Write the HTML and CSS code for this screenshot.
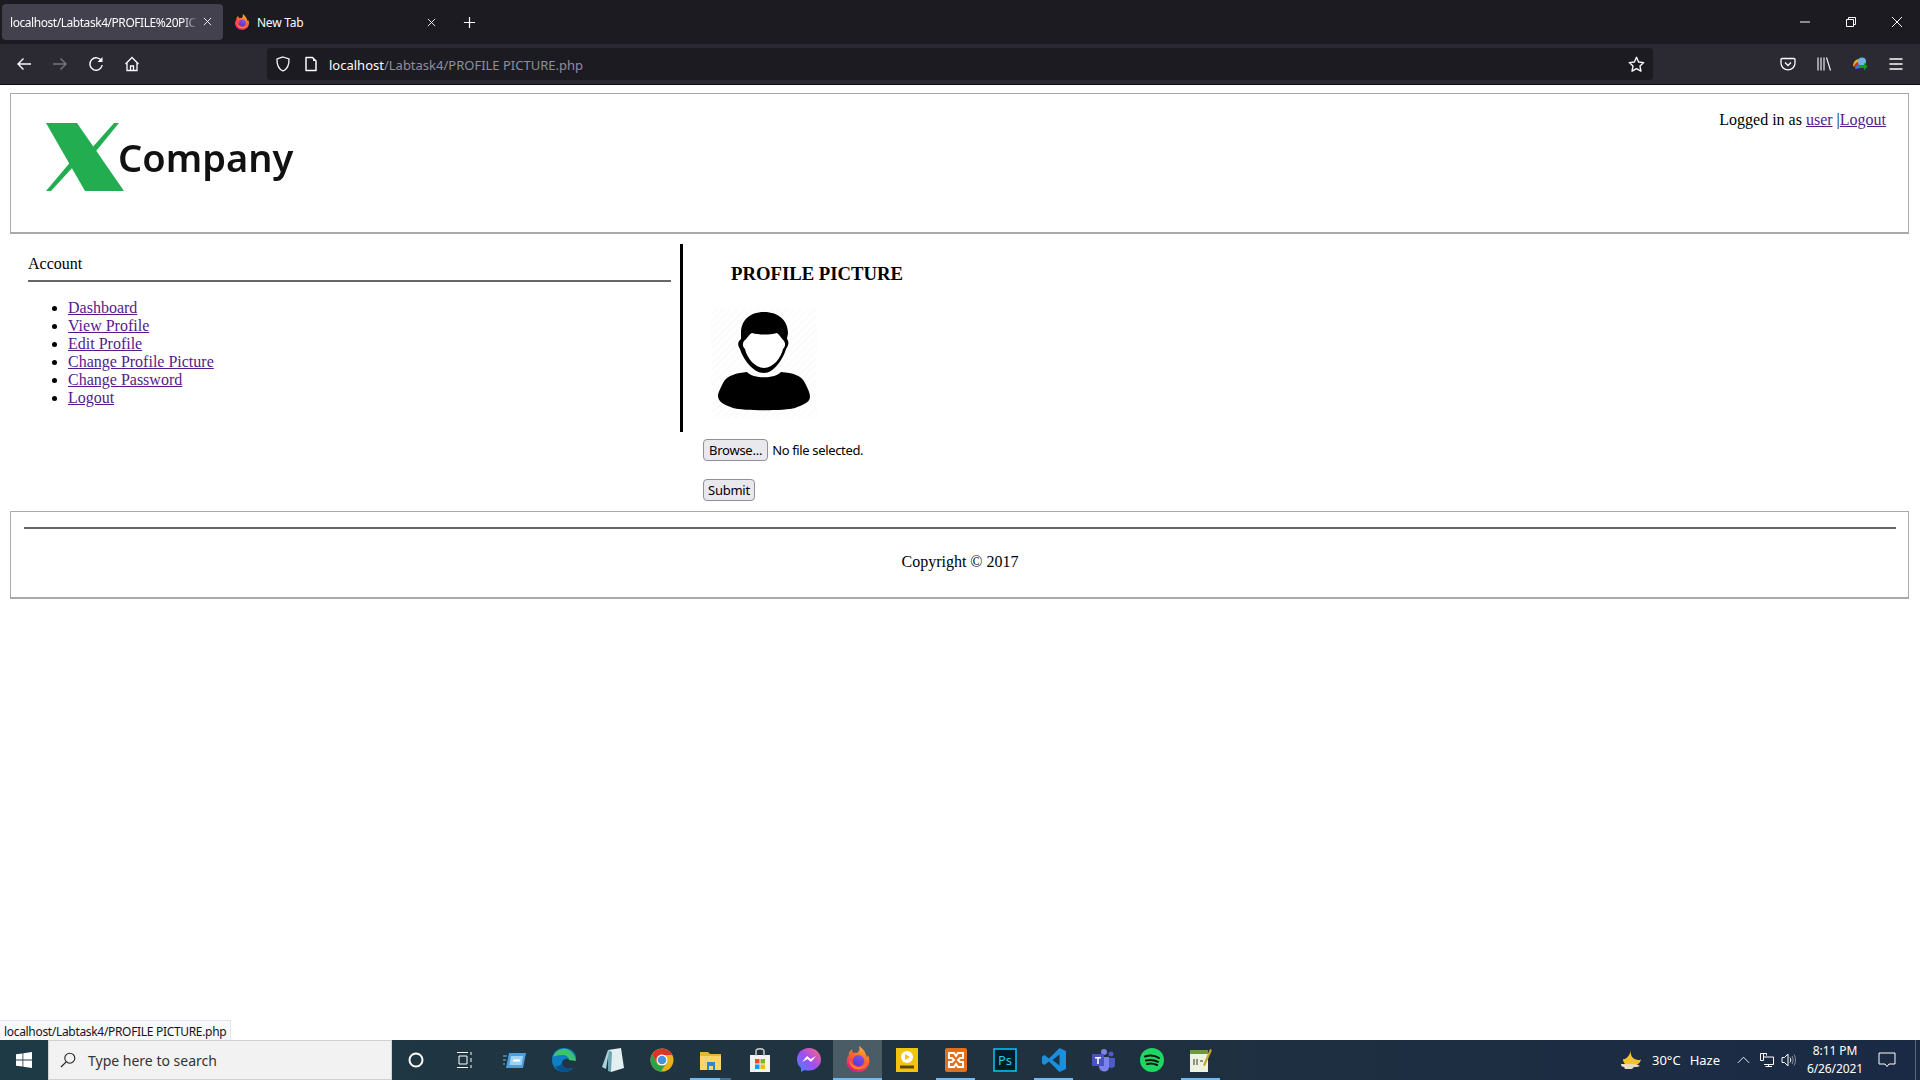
FILE: index.html
```html
<!DOCTYPE html>
<html lang="en">
<head>
    <meta charset="UTF-8">
    <title>localhost/Labtask4/PROFILE PICTURE.php</title>
    <link rel="stylesheet" href="styles.css">
</head>
<body>
    <!-- shared firefox logo, used in the tab and the taskbar -->
    <svg class="defs" width="0" height="0">
        <defs>
            <linearGradient id="fxBody" x1="0.8" y1="0" x2="0.3" y2="1">
                <stop offset="0" stop-color="#ffc02e"/>
                <stop offset="0.45" stop-color="#ff6a2b"/>
                <stop offset="1" stop-color="#e31587"/>
            </linearGradient>
            <linearGradient id="fxCore" x1="0.7" y1="0" x2="0.3" y2="1">
                <stop offset="0" stop-color="#8e4fe8"/>
                <stop offset="1" stop-color="#4b3ad6"/>
            </linearGradient>
            <linearGradient id="msgr" x1="0" y1="1" x2="1" y2="0">
                <stop offset="0" stop-color="#3a8bff"/>
                <stop offset=".5" stop-color="#a24cf2"/>
                <stop offset="1" stop-color="#ff6b7a"/>
            </linearGradient>
            <symbol id="firefox" viewBox="0 0 24 24">
                <path d="M13 0c1 3 0 5-2 6.500-1-.5-2.500-.5-3.500 0C7 5.500 6.500 4.500 6.500 3 4 4.500 3 7 3.500 9 2 10.500 1.500 12 1.500 14c0 5.800 4.700 10 10.500 10s10.500-4.700 10.500-10.500c0-2-.5-3.500-1.500-5-.2 1-.5 1.500-1 2C19.500 6 16.500 2.500 13 0z" fill="url(#fxBody)"/>
                <circle cx="12.500" cy="13.500" r="5.200" fill="url(#fxCore)"/>
                <path d="M4 13c0 6 5 9 9 8.500 4-.5 6.500-3 7.500-6-2 3-5 4.500-8.500 4-4-.5-6.500-3-8-6.500z" fill="#ff8a1f"/>
            </symbol>
        </defs>
    </svg>

    <!-- browser chrome -->
    <div class="titlebar">
        <div class="tab tab-active">
            <span class="tab-label">localhost/Labtask4/PROFILE%20PIC</span>
            <svg class="tab-close" viewBox="0 0 10 10"><path d="M1 1l8 8M9 1l-8 8" stroke="#fbfbfe" fill="none"/></svg>
        </div>
        <div class="tab">
            <svg class="tab-icon"><use href="#firefox"/></svg>
            <span class="tab-title">New Tab</span>
            <svg class="tab-close" viewBox="0 0 10 10"><path d="M1 1l8 8M9 1l-8 8" stroke="#fbfbfe" fill="none"/></svg>
        </div>
        <svg class="new-tab" viewBox="0 0 14 14"><path d="M7 1v12M1 7h12" stroke="#fbfbfe" stroke-width="1.300" fill="none"/></svg>
        <div class="window-controls">
            <svg viewBox="0 0 12 12"><path d="M1 6h10" stroke="#fbfbfe" fill="none"/></svg>
            <svg viewBox="0 0 12 12"><path d="M1.500 3.500h7v7h-7zM3.500 3.500v-2h7v7h-2" stroke="#fbfbfe" fill="none"/></svg>
            <svg viewBox="0 0 12 12"><path d="M1 1l10 10M11 1L1 11" stroke="#fbfbfe" fill="none"/></svg>
        </div>
    </div>

    <div class="toolbar">
        <div class="nav-buttons">
            <svg viewBox="0 0 16 16"><path d="M15 8H2M7.500 2.500L2 8l5.500 5.500" stroke="#fbfbfe" stroke-width="1.400" fill="none"/></svg>
            <svg viewBox="0 0 16 16"><path d="M1 8h13M8.500 2.500L14 8l-5.500 5.500" stroke="#77767e" stroke-width="1.400" fill="none"/></svg>
            <svg viewBox="0 0 16 16"><path d="M13.500 5A6.200 6.200 0 1 0 14.200 9" stroke="#fbfbfe" stroke-width="1.400" fill="none"/><path d="M14.500 1v5h-5" fill="#fbfbfe"/></svg>
            <svg viewBox="0 0 16 16"><path d="M1.500 8L8 1.500 14.500 8M3 7v7.500h10V7M6.500 14.500V10h3v4.500" stroke="#fbfbfe" stroke-width="1.300" fill="none"/></svg>
        </div>
        <div class="urlbar">
            <svg class="url-icon" viewBox="0 0 16 16"><path d="M8 1l6 2c.3 6-1.500 10-6 12C3.500 13 1.700 9 2 3z" stroke="#fbfbfe" stroke-width="1.300" fill="none"/></svg>
            <svg class="url-icon" viewBox="0 0 16 16"><path d="M3 1.500h6.500L13 5v9.500H3z" stroke="#fbfbfe" stroke-width="1.500" fill="none" stroke-linejoin="round"/><path d="M9 1.500h1V5h3" fill="#fbfbfe"/></svg>
            <span class="url-text"><span class="url-host">localhost</span>/Labtask4/PROFILE PICTURE.php</span>
            <svg class="url-star" viewBox="0 0 16 16"><path d="M8 1.200l2 4.400 4.800.6-3.500 3.300.9 4.800L8 11.900l-4.200 2.400.9-4.800L1.200 6.200 6 5.600z" stroke="#fbfbfe" stroke-width="1.300" fill="none" stroke-linejoin="round"/></svg>
        </div>
        <div class="tool-buttons">
            <svg viewBox="0 0 16 16"><path d="M2 2.500h12c.6 0 1 .4 1 1V7c0 4-3.300 6.800-7 6.800S1 11 1 7V3.500c0-.6.400-1 1-1z" stroke="#fbfbfe" stroke-width="1.300" fill="none"/><path d="M5 6.500l3 3 3-3" stroke="#fbfbfe" stroke-width="1.300" fill="none"/></svg>
            <svg viewBox="0 0 16 16"><path d="M2 1.500v13M5 1.500v13M8 1.500v13M10.500 1.500l4 13" stroke="#fbfbfe" stroke-width="1.100" fill="none"/></svg>
            <svg viewBox="0 0 16 16"><path d="M1 10c0-4 3-7 6-7l2 8z" fill="#e8b21c"/><path d="M1.500 11c1-3 3-5 5-5l1 6z" fill="#d8262c"/><path d="M3 13c0-3 2-4.500 4-4.500L9 12z" fill="#2f7fd0"/><circle cx="10" cy="5.500" r="4" fill="#6fb4e8"/><path d="M7 9h5V6.500l3.500 4-3.500 4V12H7z" fill="#119c1c"/></svg>
            <svg viewBox="0 0 16 16"><path d="M1.500 3h13M1.500 8h13M1.500 13h13" stroke="#fbfbfe" stroke-width="1.300" fill="none"/></svg>
        </div>
    </div>

    <!-- page content -->
    <div class="page">
        <div class="page-header">
            <div class="logo">
                <svg class="logo-x" viewBox="0 0 78 70" preserveAspectRatio="none">
                    <path d="M0 0h31l47 70H39z" fill="#22ad51"/>
                    <path d="M68 0h5L46 34l-3-5zM0 70h5l25-28-3-5z" fill="#22ad51"/>
                </svg>
                <span class="logo-text">Company</span>
            </div>
            <div class="login-info">Logged in as <a href="#">user</a> |<a href="#">Logout</a></div>
        </div>

        <div class="content">
            <div class="sidebar">
                <div class="sidebar-title">Account</div>
                <hr class="sidebar-rule">
                <ul class="sidebar-menu">
                    <li><a href="#">Dashboard</a></li>
                    <li><a href="#">View Profile</a></li>
                    <li><a href="#">Edit Profile</a></li>
                    <li><a href="#">Change Profile Picture</a></li>
                    <li><a href="#">Change Password</a></li>
                    <li><a href="#">Logout</a></li>
                </ul>
            </div>
            <div class="picture-panel">
                <h3 class="picture-title">PROFILE PICTURE</h3>
                <div class="avatar">
                    <svg viewBox="0 0 106 109">
                        <path d="M53 3C38 3 30 12 30 24c0 3 0 5 0 6-3 2-4 6-1 10 3 10 13 24 24 24 10 0 19-14 22-24 3-4 3-8 1-10 0-2 1-4 1-6C77 12 68 3 53 3z" fill="#000"/>
                        <path d="M33 32c3-2 5-7 8-8 7 2 17 2 25 0 3 2 4 5 7 8 2 3 1 6-1 8-2 9-10 19-19 19s-17-10-19-19c-2-2-3-5-1-8z" fill="#fff"/>
                        <path d="M36 63c6 7 28 7 34 0 12 1 20 3 24 11 3 6 5 10 5 14 0 5-7 8-15 11-10 3-52 3-62 0C14 96 7 93 7 87c0-3 2-7 5-13 4-8 14-10 24-11z" fill="#000"/>
                    </svg>
                </div>
                <form class="upload-form">
                    <div class="file-row">
                        <button type="button" class="form-button">Browse...</button>
                        <span class="file-name">No file selected.</span>
                    </div>
                    <button type="button" class="form-button submit-button">Submit</button>
                </form>
            </div>
        </div>

        <div class="page-footer">
            <hr class="footer-rule">
            <p class="copyright">Copyright © 2017</p>
        </div>

        <div class="status-tip">localhost/Labtask4/PROFILE PICTURE.php</div>
    </div>

    <!-- windows taskbar -->
    <div class="taskbar">
        <div class="start">
            <svg viewBox="0 0 16 16"><path d="M0 2.300L6.500 1.400V7.600H0zM7.300 1.300L16 0v7.600H7.300zM0 8.400h6.500v6.200L0 13.700zM7.300 8.400H16V16l-8.700-1.300z" fill="#fff"/></svg>
        </div>
        <div class="search">
            <svg viewBox="0 0 16 16"><circle cx="9.800" cy="6.200" r="5" stroke="#222" stroke-width="1.100" fill="none"/><path d="M6.200 9.800L1 15" stroke="#222" stroke-width="1.200"/></svg>
            <span>Type here to search</span>
        </div>
        <div class="task-icons">
            <div class="task-icon"><svg class="small" viewBox="0 0 16 16"><circle cx="8" cy="8" r="6.500" stroke="#fff" stroke-width="2" fill="none"/></svg></div>
            <div class="task-icon"><svg class="small" viewBox="0 0 16 16"><path d="M0 .5h11M0 15.500h11M2 4h8v8H2zM14 0v3M14 6v4M14 13v3" stroke="#fff" fill="none"/></svg></div>
            <div class="task-icon"><svg viewBox="0 0 24 24"><path d="M6 5h17l-3 15H3z" fill="#4a9fdc"/><path d="M8 8h12l-1.500 9H6.500z" fill="#9fd3f5"/><path d="M10 11.500h7v2h-7z" fill="#fff"/><path d="M0 8h4M0 12h3M0 16h2" stroke="#6bb7e8"/></svg></div>
            <div class="task-icon"><svg viewBox="0 0 24 24"><path d="M12 0C5 0 0 5 0 12c0 7 5 12 12 12 4 0 7-1.500 9-4-5 2-11 0-11-5 0-3 3-5 7-4l7 1c1-7-5-12-12-12z" fill="#0f7fc4"/><path d="M1 9C3 3 9 0 14 1c5 1 9 6 10 12l-7-1c0-3-3-5-6-5-4 0-9 1-10 2z" fill="#3bc46e"/><path d="M10 15c0 5 6 7 11 5-2 2.500-5 4-9 4-4 0-7-2-9-6 2 1 5 0 7-3z" fill="#0a4f8f"/></svg></div>
            <div class="task-icon"><svg class="shift" viewBox="0 0 24 24"><path d="M8 2l13-2 3 20-13 4z" fill="#e4eff2"/><path d="M8 2l4 2-1 20-3-1z" fill="#6fa5ae"/><path d="M2 19L8 2l1 1-3 18z" fill="#a5d3db"/></svg></div>
            <div class="task-icon"><svg viewBox="0 0 24 24"><circle cx="12" cy="12" r="11.500" fill="#e8b21c"/><path d="M12 .5A11.500 11.500 0 0 0 2 6.500L7 15l5-8h10.400A11.500 11.500 0 0 0 12 .5z" fill="#d8362c"/><path d="M2 6.500A11.500 11.500 0 0 0 11 23.500L15 17H8z" fill="#2aa24a"/><circle cx="12" cy="12" r="5.500" fill="#fff"/><circle cx="12" cy="12" r="4.300" fill="#4a8fe0"/></svg></div>
            <div class="task-icon running stacked">
                <svg viewBox="0 0 24 24"><path d="M1 4h8l2 2h11v16H1z" fill="#e8b534"/><path d="M1 8h21v14H1z" fill="#fbd56b"/><path d="M8 14h8v8h-2v-4h-4v4H8z" fill="#2a88cf"/></svg>
            </div>
            <div class="task-icon"><svg viewBox="0 0 24 24"><path d="M2 7h20v17H2z" fill="#f3f3f3"/><path d="M8 8V3c0-3 8-3 8 0v5" stroke="#ccc" stroke-width="1.500" fill="none"/><path d="M7 11h4.500v4.500H7z" fill="#e8501f"/><path d="M12.500 11H17v4.500h-4.500z" fill="#7cb928"/><path d="M7 16.500h4.500V21H7z" fill="#02a3ee"/><path d="M12.500 16.500H17V21h-4.500z" fill="#fbb70f"/></svg></div>
            <div class="task-icon"><svg viewBox="0 0 24 24"><path d="M12 0C5 0 0 5 0 11.500c0 3.500 1.500 6.500 4 8.500v4l3.500-2c1.500.5 3 .6 4.500.6 7 0 12-5 12-11S19 0 12 0z" fill="url(#msgr)"/><path d="M5 14l5-6 3.500 3L19 8l-5 6-3.500-3z" fill="#fff"/></svg></div>
            <div class="task-icon active"><svg class="large"><use href="#firefox"/></svg></div>
            <div class="task-icon"><svg viewBox="0 0 24 24"><path d="M1 0h22v24H1z" fill="#f3c40f"/><circle cx="12" cy="9" r="6" fill="#fff"/><path d="M10 6l5 3-5 3z" fill="#f3c40f"/><path d="M5 17.500h14v3H5z" fill="#5a4a00"/></svg></div>
            <div class="task-icon running"><svg viewBox="0 0 24 24"><rect x="1" width="22" height="24" rx="2" fill="#e0701e"/><path d="M5 5h5l2 3 2-3h5v5h-3l-2 2 2 2h3v5h-5l-2-3-2 3H5v-5h3l2-2-2-2H5z" fill="none" stroke="#fff" stroke-width="2"/></svg></div>
            <div class="task-icon"><svg viewBox="0 0 24 24"><path d="M1 1h22v22H1z" fill="#001d26" stroke="#00c8ff" stroke-width="1.500"/><text x="5" y="17" class="ps-label">Ps</text></svg></div>
            <div class="task-icon running"><svg viewBox="0 0 24 24"><path d="M17.500 0L24 3v18l-6.500 3L7 13.500 2.500 17 0 15.500V8.500L2.500 7 7 10.500zM17.500 6.500L10.500 12l7 5.500z" fill="#1a8fdd"/></svg></div>
            <div class="task-icon"><svg viewBox="0 0 24 24"><circle cx="13" cy="4" r="3" fill="#7b83eb"/><circle cx="20" cy="6" r="2.500" fill="#5059c9"/><path d="M8 9h10v10c0 6-9 6-10 0z" fill="#7b83eb"/><path d="M18 10h6v7c0 3-4 4-6 2z" fill="#5059c9"/><path d="M1 6h12v12H1z" fill="#4b53bc"/><path d="M4 9h6v1.500H7.800V16H6.200v-5.500H4z" fill="#fff"/></svg></div>
            <div class="task-icon"><svg viewBox="0 0 24 24"><circle cx="12" cy="12" r="12" fill="#1ed760"/><path d="M5 8.500c5-1.500 10-1 14 1.500M6 12.500c4-1 8-.7 12 1.300M7 16c3-.8 7-.5 10 1" stroke="#111" stroke-width="2" stroke-linecap="round" fill="none"/></svg></div>
            <div class="task-icon running"><svg class="shift" viewBox="0 0 24 24"><path d="M2 2h18v22H2z" fill="#eef3e0"/><path d="M2 2h18v4H2z" fill="#6f9a3a"/><path d="M6 11v6M9 11v6M12 13h3" stroke="#333" fill="none"/><path d="M15 17L22 1l2 1-7 16z" fill="#c9a227"/></svg></div>
        </div>
        <div class="tray">
            <svg class="tray-moon" viewBox="0 0 22 20"><path d="M11 0c-1 5 1 9 7 10 1 0 2 0 3-.5C20 14 16 16 11 16 6 16 3 13 3 9c3 1 7-4 8-9z" fill="#f6c42a"/><path d="M1 14h10c4 0 8 1 9 2-2 1-4 1-6 1l-2 2H5l-1-2c-2 0-3-1-3-3z" fill="#e9dcc0"/></svg>
            <span class="tray-weather">30°C</span>
            <span class="tray-weather">Haze</span>
            <svg class="tray-icon chevron" viewBox="0 0 14 14"><path d="M1 10l6-6 6 6" stroke="#fff" fill="none"/></svg>
            <svg class="tray-icon" viewBox="0 0 16 16"><path d="M1.500 1.500h6v2M4.500 1.500v7h-3v-7M5 5h9.500v7.500H5M9.500 12.500v2M6.500 14.500h6.500" stroke="#fff" fill="none"/></svg>
            <svg class="tray-icon" viewBox="0 0 16 16"><path d="M1 5.500h2.500L7 2v12l-3.500-3.500H1z" stroke="#fff" fill="none"/><path d="M9 5.500c1 1.500 1 3.500 0 5" stroke="#fff" fill="none"/><path d="M11 4c1.500 2.500 1.500 5.500 0 8M13 2.500c2 3.500 2 7.500 0 11" stroke="#8b93a3" fill="none"/></svg>
            <div class="clock"><div>8:11 PM</div><div>6/26/2021</div></div>
            <svg class="tray-icon notify" viewBox="0 0 18 16"><path d="M1 1h16v11h-6l-2 2.500L7 12H1z" stroke="#fff" fill="none"/></svg>
            <div class="show-desktop"></div>
        </div>
    </div>
</body>
</html>
```

FILE: styles.css
```css
html, body {
    height: 100%;
}

body {
    margin: 0;
    height: 1080px;
    overflow: hidden;
    display: flex;
    flex-direction: column;
    background: #fff;
    font-family: "Liberation Serif", serif;
    font-size: 16px;
    color: #000;
}

.defs {
    position: absolute;
}

/* browser chrome */
.titlebar {
    height: 44px;
    flex: none;
    display: flex;
    align-items: center;
    padding-left: 2px;
    background: #1c1b22;
    font-family: "Noto Sans", sans-serif;
    font-size: 12px;
    letter-spacing: -0.25px;
    color: #fbfbfe;
}

.tab {
    width: 221px;
    height: 36px;
    box-sizing: border-box;
    display: flex;
    align-items: center;
    padding: 0 8px;
    border-radius: 4px;
}

.tab-active {
    background: #42414d;
    position: relative;
}

.tab-active .tab-close {
    position: absolute;
    right: 11px;
    top: 13px;
}

.tab-label {
    width: 188px;
    overflow: hidden;
    white-space: nowrap;
    letter-spacing: -0.45px;
    -webkit-mask-image: linear-gradient(to right, #000 92%, transparent);
    mask-image: linear-gradient(to right, #000 92%, transparent);
}

.tab-icon {
    width: 16px;
    height: 16px;
    margin-left: 3px;
    margin-right: 7px;
}

.tab-title {
    flex: 1;
}

.tab-close {
    width: 9px;
    height: 9px;
    margin-right: 0;
}

.new-tab {
    width: 13px;
    height: 13px;
    margin-left: 19px;
}

.window-controls {
    margin-left: auto;
    display: flex;
    align-items: center;
    gap: 34px;
    padding-right: 17px;
}

.window-controls svg {
    width: 12px;
    height: 12px;
}

.toolbar {
    height: 40px;
    flex: none;
    box-sizing: border-box;
    display: flex;
    align-items: center;
    background: #2b2a33;
}

.nav-buttons, .tool-buttons {
    display: flex;
    align-items: center;
    gap: 20px;
}

.nav-buttons {
    padding-left: 16px;
    width: 251px;
}

.nav-buttons svg, .tool-buttons svg {
    width: 16px;
    height: 16px;
}

.urlbar {
    width: 1386px;
    height: 32px;
    display: flex;
    align-items: center;
    background: #1c1b22;
    border-radius: 4px;
    font-family: "Noto Sans", sans-serif;
    font-size: 13px;
    color: #8f8f9d;
}

.url-icon {
    width: 16px;
    height: 16px;
    margin-left: 8px;
    margin-right: -1px;
}

.url-icon:first-child {
    margin-left: 8px;
    margin-right: 4px;
}

.url-text {
    margin-left: 11px;
    padding-top: 2px;
    white-space: nowrap;
}

.url-host {
    color: #fbfbfe;
}

.url-star {
    width: 17px;
    height: 17px;
    margin-left: auto;
    margin-right: 8px;
}

.tool-buttons {
    margin-left: auto;
    padding-right: 16px;
}

/* page */
.page {
    flex: 1;
    position: relative;
    border-top: 1px solid #0c0c0d;
    padding: 8px 11px 0 10px;
}

.page-header {
    height: 141px;
    box-sizing: border-box;
    border: 2px solid #a9a9a9;
    border-width: 1px 1px 2px 1px;
    display: flex;
    justify-content: space-between;
    padding: 17px 22px 0 35px;
}

.logo {
    display: flex;
    align-items: flex-end;
    height: 80px;
    padding-top: 12px;
    box-sizing: border-box;
}

.logo-x {
    width: 78px;
    height: 68px;
}

.logo-text {
    margin-left: -6px;
    margin-bottom: 9px;
    font-family: "Noto Sans", sans-serif;
    font-weight: 600;
    font-size: 38px;
    line-height: 50px;
    color: #111;
    filter: blur(0.7px);
}

.login-info a, .sidebar-menu a {
    color: #551a8b;
}

.content {
    display: flex;
    align-items: flex-start;
    padding-top: 10px;
}

.sidebar {
    width: 673px;
    height: 188px;
    flex: none;
    border-right: 3px solid #000;
    padding-left: 18px;
    box-sizing: border-box;
}

.sidebar-title {
    padding-top: 11px;
    line-height: 18px;
}

.sidebar-rule {
    width: 643px;
    margin: 7px 0 0;
    border: 0;
    border-top: 2px solid #666;
}

.sidebar-menu {
    margin: 17px 0 0;
    padding-left: 40px;
    list-style: disc;
}

.picture-panel {
    padding-left: 20px;
}

.picture-title {
    margin: 19px 0 0 28px;
    font-size: 18.720px;
    line-height: 21px;
}

.avatar {
    width: 106px;
    height: 109px;
    margin: 25px 0 0 8px;
    background: repeating-linear-gradient(135deg, #fff 0 3px, #fbfbfb 3px 5px);
}

.avatar svg {
    display: block;
    width: 106px;
    height: 109px;
}

.upload-form {
    margin-top: 21px;
    font-family: "Noto Sans", sans-serif;
    font-size: 13px;
    letter-spacing: -0.25px;
}

.file-row {
    display: flex;
    align-items: center;
    gap: 4px;
    margin-bottom: 18px;
}

.file-name {
    letter-spacing: -0.35px;
}

.form-button {
    height: 22px;
    padding: 0 5px;
    border: 1px solid #8f8f9d;
    border-radius: 4px;
    background: #e9e9ed;
    font: inherit;
    letter-spacing: inherit;
    color: #000;
}

.submit-button {
    padding: 0 4px;
}

.page-footer {
    height: 88px;
    box-sizing: border-box;
    margin-top: 10px;
    border: 2px solid #a9a9a9;
    border-width: 1px 1px 2px 1px;
    padding: 15px 12px 0 13px;
}

.footer-rule {
    margin: 0;
    border: 0;
    border-top: 2px solid #666;
}

.copyright {
    margin: 24px 0 0;
    text-align: center;
    line-height: 18px;
}

.status-tip {
    position: absolute;
    left: 0;
    bottom: 0;
    height: 20px;
    box-sizing: border-box;
    padding: 2px 4px 0;
    background: #f9f9fb;
    border: 1px solid #e5e5e8;
    border-width: 1px 1px 0 0;
    font-family: "Noto Sans", sans-serif;
    font-size: 12px;
    letter-spacing: -0.32px;
    line-height: 17px;
    color: #15141a;
}

/* taskbar */
.taskbar {
    height: 40px;
    flex: none;
    display: flex;
    align-items: stretch;
    background: linear-gradient(to right, #1e3a45 0%, #20323f 50%, #1a2a45 100%);
    font-family: "Noto Sans", sans-serif;
    color: #fff;
}

.start {
    width: 48px;
    display: flex;
    align-items: center;
    justify-content: center;
}

.start svg {
    width: 16px;
    height: 16px;
}

.search {
    width: 344px;
    box-sizing: border-box;
    display: flex;
    align-items: center;
    gap: 12px;
    padding-left: 11px;
    background: #f2f2f2;
    border: 1px solid #d0d0d0;
    color: #333;
    font-size: 14px;
}

.search svg {
    width: 16px;
    height: 16px;
}

.task-icons {
    display: flex;
}

.task-icon {
    width: 49px;
    box-sizing: border-box;
    display: flex;
    align-items: center;
    justify-content: center;
}

.task-icon svg {
    width: 24px;
    height: 24px;
}

.task-icon svg.small {
    width: 16px;
    height: 16px;
    margin-right: 2px;
}

.task-icon svg.shift {
    margin-right: 2px;
}

.task-icon svg.large {
    width: 26px;
    height: 28px;
}

.task-icon.active {
    background: #4a5c66;
    border-bottom: 2px solid #76b9ed;
}

.task-icon.running {
    position: relative;
}

.task-icon.running::after {
    content: "";
    position: absolute;
    left: 5px;
    right: 5px;
    bottom: 0;
    height: 2px;
    background: #76b9ed;
}

.task-icon.stacked::after {
    left: 4px;
    right: 4px;
    background: linear-gradient(to right, #76b9ed 74%, #3f6f91 74%);
}

.ps-label {
    font-family: "Noto Sans", sans-serif;
    font-size: 13px;
    fill: #31c5f0;
}

.tray {
    margin-left: auto;
    display: flex;
    align-items: center;
    font-size: 13px;
}

.tray-moon {
    width: 22px;
    height: 20px;
    margin-right: 10px;
}

.tray-weather {
    margin-right: 9px;
}

.tray-icon {
    width: 16px;
    height: 16px;
    margin-right: 6px;
}

.tray-icon.chevron {
    width: 13px;
    margin-left: 8px;
    margin-right: 9px;
}

.clock {
    width: 72px;
    margin-left: -4px;
    text-align: center;
    font-size: 12px;
    letter-spacing: -0.1px;
    line-height: 18px;
}

.tray-icon.notify {
    width: 18px;
    margin: 0 0 0 7px;
}

.show-desktop {
    width: 1px;
    height: 40px;
    margin-left: 19px;
    margin-right: 4px;
    background: #5d6776;
}
```
